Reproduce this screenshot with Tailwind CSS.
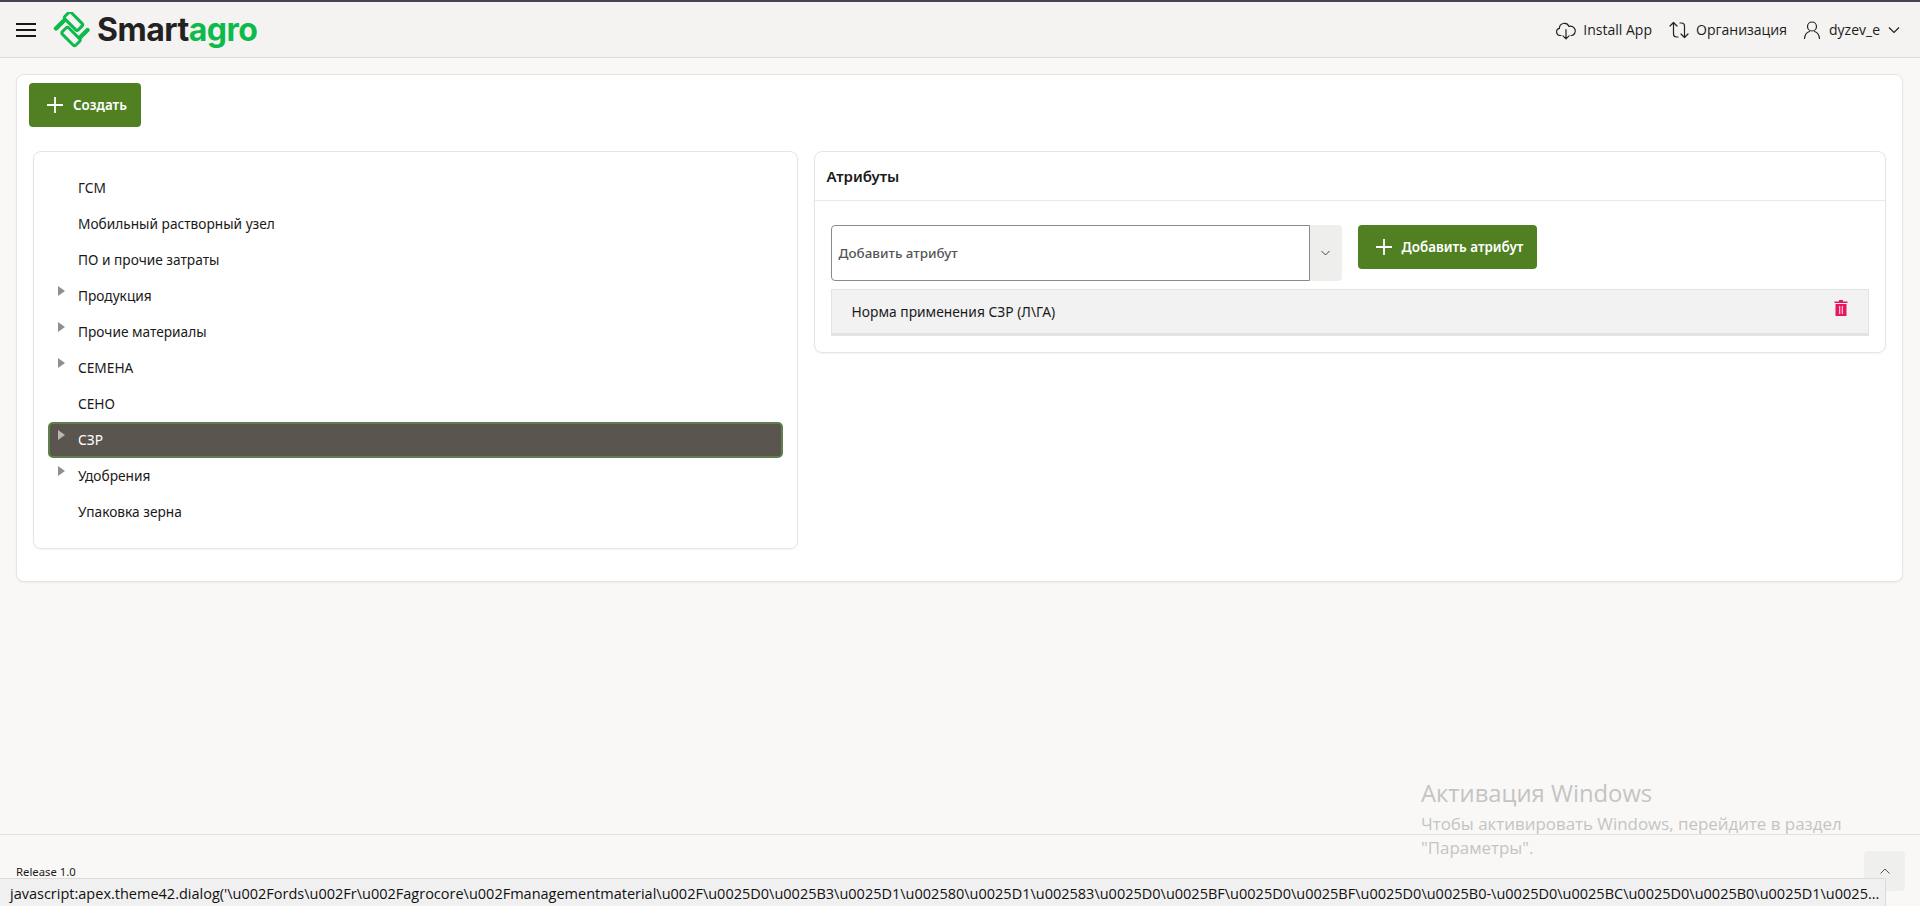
<!DOCTYPE html>
<html lang="ru">
<head>
    <meta charset="UTF-8">
    <title>Smartagro</title>
    <script src="https://cdn.jsdelivr.net/npm/@tailwindcss/browser@4"></script>
</head>
<body class="relative h-[906px] overflow-hidden bg-[#f9f8f6] font-['Noto_Sans',sans-serif] text-[#1a1a1a] flex flex-col">
    <!-- header -->
    <header class="h-[58px] shrink-0 border-t-2 border-b border-t-[#45434f] border-b-[#dedcd9] bg-[#f4f3f1] flex items-center pl-4 pr-5">
        <div class="w-5 flex flex-col gap-[4px]">
            <span class="h-[2px] bg-[#161616]"></span>
            <span class="h-[2px] bg-[#161616]"></span>
            <span class="h-[2px] bg-[#161616]"></span>
        </div>
        <svg class="ml-[17px] w-[38px] h-[36px]" viewBox="0 0 38 36" fill="none">
            <g stroke="#0dba4b" stroke-width="3">
                <rect x="11" y="4.700" width="19" height="9" rx="2" transform="rotate(45 20.500 9.200)"/>
                <rect x="8.500" y="20" width="19" height="9" rx="2" transform="rotate(45 18 24.500)"/>
            </g>
            <path d="M3 16.500L10.500 9M27 25.500l7.500-7.500" stroke="#0dba4b" stroke-width="4.400" stroke-linecap="round"/>
        </svg>
        <div class="ml-[6px] text-[32px] leading-none font-bold font-['Inter',sans-serif] tracking-[-0.5px] text-[#222222]">Smart<span class="text-[#0dba4b]">agro</span></div>
        <div class="ml-auto flex items-center font-['Open_Sans',sans-serif] text-[14px] text-[#1c1c1c]">
            <svg class="w-[22px] h-[22px]" viewBox="0 0 22 22" fill="none" stroke="#222" stroke-width="1.200" stroke-linecap="round" stroke-linejoin="round">
                <path d="M6 16.500H5a3.600 3.600 0 0 1-.6-7.100A5 5 0 0 1 14 7.400a4.300 4.300 0 0 1 3 9.100h-1"/>
                <path d="M11 10.500v9M8 16.800l3 3 3-3"/>
            </svg>
            <span class="ml-[6px]">Install App</span>
            <svg class="ml-[16px] w-[22px] h-[22px]" viewBox="0 0 22 22" fill="none" stroke="#222" stroke-width="1.200" stroke-linecap="round" stroke-linejoin="round">
                <path d="M2 7l3.500-3.500L9 7M5.500 3.500V15a3 3 0 0 0 3 3H10"/>
                <path d="M20 15l-3.500 3.500L13 15M16.500 18.500V7a3 3 0 0 0-3-3H12"/>
            </svg>
            <span class="ml-[6px]">Организация</span>
            <svg class="ml-[15px] w-[20px] h-[20px]" viewBox="0 0 20 20" fill="none" stroke="#222" stroke-width="1.200" stroke-linecap="round">
                <circle cx="10" cy="6.500" r="4.500"/>
                <path d="M2.500 18.500c.5-4 3-6.500 5-7M17.500 18.500c-.5-4-3-6.500-5-7"/>
            </svg>
            <span class="ml-[7px]">dyzev_e</span>
            <svg class="ml-[8px] w-[12px] h-[8px]" viewBox="0 0 12 8" fill="none" stroke="#222" stroke-width="1.200"><path d="M1 1.500l5 5 5-5"/></svg>
        </div>
    </header>

    <main class="flex-1 min-h-0 px-4 pt-4">
        <section class="w-[1887px] h-[508px] rounded-lg border border-[#e6e5e2] bg-white shadow-[0_1px_2px_rgba(0,0,0,0.05)] pl-[12px] pt-2 pr-[16px]">
            <button class="w-[112px] h-[44px] rounded-[4px] bg-[#508022] text-white text-[13.400px] font-semibold flex items-center pl-[18px] gap-[10px]">
                <svg class="w-[16px] h-[16px]" viewBox="0 0 16 16" stroke="#fff" stroke-width="1.800"><path d="M8 0v16M0 8h16"/></svg>
                Создать
            </button>
            <div class="mt-[24px] flex items-start gap-[16px] pl-[4px]">
                <!-- tree -->
                <div class="w-[765px] h-[398px] rounded-lg border border-[#e6e5e2] shadow-[0_1px_2px_rgba(0,0,0,0.05)] px-[14px] pt-[18px] text-[13.700px]">
                    <div class="h-9 flex items-center pl-[30px]">ГСМ</div>
                    <div class="h-9 flex items-center pl-[30px]">Мобильный растворный узел</div>
                    <div class="h-9 flex items-center pl-[30px]">ПО и прочие затраты</div>
                    <div class="relative h-9 flex items-center pl-[30px]"><span class="absolute left-[10px] top-2 border-y-[5px] border-l-[7px] border-y-transparent border-l-[#8f8f8f]"></span>Продукция</div>
                    <div class="relative h-9 flex items-center pl-[30px]"><span class="absolute left-[10px] top-2 border-y-[5px] border-l-[7px] border-y-transparent border-l-[#8f8f8f]"></span>Прочие материалы</div>
                    <div class="relative h-9 flex items-center pl-[30px]"><span class="absolute left-[10px] top-2 border-y-[5px] border-l-[7px] border-y-transparent border-l-[#8f8f8f]"></span>СЕМЕНА</div>
                    <div class="h-9 flex items-center pl-[30px]">СЕНО</div>
                    <div class="relative h-9 flex items-center pl-[28px] rounded-[5px] border-2 border-[#5f7f4c] bg-[#5a554e] text-white"><span class="absolute left-[8px] top-[6px] border-y-[5px] border-l-[7px] border-y-transparent border-l-[#b9b7b3]"></span>СЗР</div>
                    <div class="relative h-9 flex items-center pl-[30px]"><span class="absolute left-[10px] top-2 border-y-[5px] border-l-[7px] border-y-transparent border-l-[#8f8f8f]"></span>Удобрения</div>
                    <div class="h-9 flex items-center pl-[30px]">Упаковка зерна</div>
                </div>
                <!-- attributes -->
                <div class="w-[1073px] h-[202px] rounded-lg border border-[#e6e5e2] shadow-[0_1px_2px_rgba(0,0,0,0.05)]">
                    <div class="h-[49px] border-b border-[#e9e8e6] flex items-center pl-3 pt-px text-[15px] font-semibold">Атрибуты</div>
                    <div class="pl-4 pr-4 pt-[24px]">
                        <div class="flex items-start">
                            <div class="w-[479px] h-[56px] rounded-l-[4px] border border-[#8a8a8a] bg-white flex items-center pl-[7px] pt-px text-[13.400px] font-medium text-[#555555]">Добавить атрибут</div>
                            <div class="w-[32px] h-[56px] rounded-r-[4px] bg-[#eeeeec] flex items-center justify-center">
                                <svg class="w-[9px] h-[6px]" viewBox="0 0 9 6" fill="none" stroke="#444" stroke-width="1"><path d="M.5 1l4 4 4-4"/></svg>
                            </div>
                            <button class="ml-4 w-[179px] h-[44px] rounded-[4px] bg-[#508022] text-white text-[13.400px] font-semibold flex items-center pl-[18px] gap-[10px]">
                                <svg class="w-[16px] h-[16px]" viewBox="0 0 16 16" stroke="#fff" stroke-width="1.800"><path d="M8 0v16M0 8h16"/></svg>
                                Добавить атрибут
                            </button>
                        </div>
                        <div class="mt-2 h-[47px] border border-[#e3e3e3] border-b-[3px] bg-[#f2f2f2] flex items-center justify-between pl-[20px] pr-[20px] pt-px text-[13.800px]">
                            Норма применения СЗР (Л\ГА)
                            <svg class="w-[14px] h-[16px] -mt-[9px]" viewBox="0 0 14 16" fill="#e8175d">
                                <path d="M5 0h4v1.500h4.500V3H.5V1.500H5z"/>
                                <path fill-rule="evenodd" d="M1.500 4h11v12h-11zM5.200 6v8h1V6zM7.800 6v8h1V6z"/>
                            </svg>
                        </div>
                    </div>
                </div>
            </div>
        </section>
    </main>

    <!-- footer -->
    <footer class="h-[72px] shrink-0 border-t border-[#e2e1de] text-[11.300px] pl-4 pt-[29px] leading-[16px]">Release 1.0</footer>

    <!-- scroll top button -->
    <div class="absolute left-[1864px] top-[851px] w-[41px] h-[40px] rounded-[4px] bg-[#efefed] flex items-center justify-center">
        <svg class="w-[10px] h-[6px]" viewBox="0 0 10 6" fill="none" stroke="#555" stroke-width="1"><path d="M.5 5.500L5 1l4.500 4.500"/></svg>
    </div>

    <!-- browser link status -->
    <div class="absolute left-0 bottom-0 w-[1886px] h-[28px] bg-[#f0f0f0] border-t border-r border-[#dcdcdc] pl-[10px] pt-[2px] flex items-center font-['Open_Sans',sans-serif] text-[14.500px] text-[#111111] whitespace-nowrap overflow-hidden">javascript:apex.theme42.dialog('\u002Fords\u002Fr\u002Fagrocore\u002Fmanagementmaterial\u002F\u0025D0\u0025B3\u0025D1\u002580\u0025D1\u002583\u0025D0\u0025BF\u0025D0\u0025BF\u0025D0\u0025B0-\u0025D0\u0025BC\u0025D0\u0025B0\u0025D1\u0025...</div>

    <!-- windows watermark -->
    <div class="absolute left-[1421px] top-[776px] w-[470px] font-['Open_Sans',sans-serif] text-[#c4c4c4] pointer-events-none">
        <div class="text-[23.800px] leading-[34px]">Активация Windows</div>
        <div class="text-[16.900px] leading-[24px] mt-[2px]">Чтобы активировать Windows, перейдите в раздел<br>"Параметры".</div>
    </div>
</body>
</html>
